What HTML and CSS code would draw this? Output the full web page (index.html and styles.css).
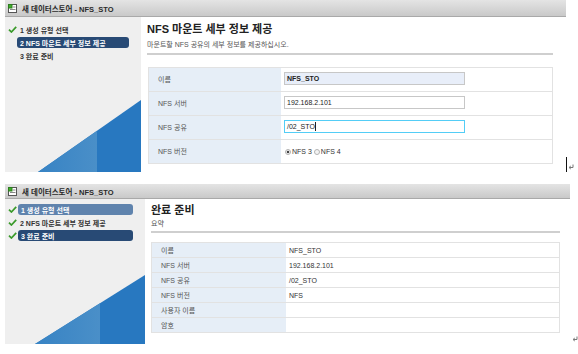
FILE: index.html
```html
<!doctype html>
<html lang="ko">
    <head>
        <meta charset="UTF-8" />
        <meta name="viewport" content="width=device-width, initial-scale=1" />
        <link rel="stylesheet" href="styles.css">
        <title>새 데이터스토어 - NFS_STO</title>
    </head>
    <body>
        <!-- Step 2: mount details -->
        <div class="row">
            <div class="dialog dialog-a">
                <div class="titlebar">
                    <svg class="app-icon" width="9" height="9" viewBox="0 0 9 9">
                        <rect x="0.5" y="0.5" width="8" height="8" fill="#fff" stroke="#555"/>
                        <rect x="0.5" y="0.5" width="3.5" height="3.5" fill="#3fae2a" stroke="#2e7d20"/>
                        <line x1="5" y1="3" x2="7.5" y2="3" stroke="#888"/>
                        <line x1="2" y1="5.5" x2="7.5" y2="5.5" stroke="#888"/>
                    </svg>
                    <span>새 데이터스토어 - NFS_STO</span>
                </div>
                <div class="dialog-body">
                    <aside class="steps">
                        <ul class="step-list">
                            <li class="step done"><span class="check"></span><span class="step-label">1 생성 유형 선택</span></li>
                            <li class="step"><span class="check"></span><span class="step-label current">2 NFS 마운트 세부 정보 제공</span></li>
                            <li class="step"><span class="check"></span><span class="step-label">3 완료 준비</span></li>
                        </ul>
                        <svg class="art" width="136" height="72" viewBox="0 0 136 72">
                            <defs>
                                <linearGradient id="lightA" x1="0" x2="1" y1="0" y2="0">
                                    <stop offset="0" stop-color="#3783c4"/>
                                    <stop offset="1" stop-color="#4a8fc8"/>
                                </linearGradient>
                            </defs>
                            <polygon points="33,72 136,0 136,72" fill="#2878c0"/>
                            <polygon points="33,72 92,30.8 92,72" fill="url(#lightA)"/>
                        </svg>
                    </aside>
                    <main class="pane">
                        <h1 class="pane-title">NFS 마운트 세부 정보 제공</h1>
                        <p class="pane-sub">마운트할 NFS 공유의 세부 정보를 제공하십시오.</p>
                        <div class="rule"></div>
                        <table class="form">
                            <tr>
                                <th>이름</th>
                                <td><div class="field filled">NFS_STO</div></td>
                            </tr>
                            <tr>
                                <th>NFS 서버</th>
                                <td><div class="field">192.168.2.101</div></td>
                            </tr>
                            <tr>
                                <th>NFS 공유</th>
                                <td><div class="field focus">/02_STO<span class="caret"></span></div></td>
                            </tr>
                            <tr>
                                <th>NFS 버전</th>
                                <td>
                                    <div class="radios">
                                        <span class="radio checked"></span><span>NFS 3</span>
                                        <span class="radio"></span><span>NFS 4</span>
                                    </div>
                                </td>
                            </tr>
                        </table>
                    </main>
                </div>
            </div>
            <div class="mark">
                <span class="cursor"></span>
                <svg class="para" width="6" height="6" viewBox="0 0 6 6">
                    <path d="M5 0.5 V3.5 H1.5 M2.8 2 L1 3.5 L2.8 5" fill="none" stroke="#777" stroke-width="1"/>
                </svg>
            </div>
        </div>

        <!-- Step 3: ready to complete -->
        <div class="row row-b">
            <div class="dialog dialog-b">
                <div class="titlebar">
                    <svg class="app-icon" width="9" height="9" viewBox="0 0 9 9">
                        <rect x="0.5" y="0.5" width="8" height="8" fill="#fff" stroke="#555"/>
                        <rect x="0.5" y="0.5" width="3.5" height="3.5" fill="#3fae2a" stroke="#2e7d20"/>
                        <line x1="5" y1="3" x2="7.5" y2="3" stroke="#888"/>
                        <line x1="2" y1="5.5" x2="7.5" y2="5.5" stroke="#888"/>
                    </svg>
                    <span>새 데이터스토어 - NFS_STO</span>
                </div>
                <div class="dialog-body">
                    <aside class="steps">
                        <ul class="step-list">
                            <li class="step done"><span class="check"></span><span class="step-label visited">1 생성 유형 선택</span></li>
                            <li class="step done"><span class="check"></span><span class="step-label">2 NFS 마운트 세부 정보 제공</span></li>
                            <li class="step done"><span class="check"></span><span class="step-label current">3 완료 준비</span></li>
                        </ul>
                        <svg class="art" width="140" height="69" viewBox="0 0 140 69">
                            <defs>
                                <linearGradient id="lightB" x1="0" x2="1" y1="0" y2="0">
                                    <stop offset="0" stop-color="#3783c4"/>
                                    <stop offset="1" stop-color="#4a8fc8"/>
                                </linearGradient>
                            </defs>
                            <polygon points="30,69 140,0 140,69" fill="#2878c0"/>
                            <polygon points="30,69 95,28.2 95,69" fill="url(#lightB)"/>
                        </svg>
                    </aside>
                    <main class="pane">
                        <h1 class="pane-title">완료 준비</h1>
                        <p class="pane-sub">요약</p>
                        <div class="rule"></div>
                        <table class="summary">
                            <tr><th>이름</th><td>NFS_STO</td></tr>
                            <tr><th>NFS 서버</th><td>192.168.2.101</td></tr>
                            <tr><th>NFS 공유</th><td>/02_STO</td></tr>
                            <tr><th>NFS 버전</th><td>NFS</td></tr>
                            <tr><th>사용자 이름</th><td></td></tr>
                            <tr><th>암호</th><td></td></tr>
                        </table>
                    </main>
                </div>
            </div>
            <div class="mark">
                <svg class="para" width="6" height="6" viewBox="0 0 6 6">
                    <path d="M5 0.5 V3.5 H1.5 M2.8 2 L1 3.5 L2.8 5" fill="none" stroke="#777" stroke-width="1"/>
                </svg>
            </div>
        </div>
    </body>
</html>
```

FILE: styles.css
```css
html,
body {
    margin: 0;
    padding: 0;
}
body {
    background: #fff;
    font-family: "Liberation Sans", "Noto Sans CJK KR", sans-serif;
    font-size: 7px;
    color: #333;
    overflow: hidden;
}

/* -- PAGE ROWS -- */

.row {
    display: flex;
    align-items: flex-end;
    padding-left: 5px;
}
.row-b {
    margin-top: 12px;
}
.mark {
    display: flex;
    align-items: flex-end;
    height: 16px;
}
.cursor {
    width: 1px;
    height: 15px;
    background: #111;
}
.para {
    margin-left: 1px;
    margin-bottom: 2px;
}
.row-b .mark {
    margin-left: 1px;
}

/* -- DIALOG -- */

.dialog {
    display: flex;
    flex-direction: column;
    overflow: hidden;
}
.dialog-a {
    width: 561px;
    height: 172px;
}
.dialog-b {
    width: 566px;
    height: 160px;
}
.titlebar {
    display: flex;
    align-items: center;
    gap: 5px;
    padding-left: 3px;
    background: linear-gradient(#e4e4e4, #c9c9c9);
    border-bottom: 1px solid #a9a9a9;
    font-weight: bold;
    font-size: 7.5px;
    color: #2a2a2a;
}
.dialog-a .titlebar {
    height: 16px;
}
.dialog-b .titlebar {
    height: 14px;
}
.dialog-body {
    flex: 1;
    display: flex;
    min-height: 0;
}

/* -- STEPS -- */

.steps {
    display: flex;
    flex-direction: column;
    justify-content: space-between;
    background: #efefef;
}
.dialog-a .steps {
    width: 136px;
}
.dialog-b .steps {
    width: 140px;
}
.step-list {
    list-style: none;
    margin: 0;
    padding: 7px 0 0 3px;
}
.dialog-b .step-list {
    padding-top: 5px;
}
.step {
    display: flex;
    align-items: center;
    height: 11px;
    margin-bottom: 2px;
    font-weight: bold;
    color: #333;
}
.check {
    width: 9px;
    height: 7px;
    flex: none;
}
.step.done .check {
    background: no-repeat center / 9px 7px
        url("data:image/svg+xml,%3Csvg xmlns='http://www.w3.org/2000/svg' viewBox='0 0 9 7'%3E%3Cpath d='M1 3.6 L3.4 6 L8.2 0.8' fill='none' stroke='%233a9a2a' stroke-width='1.7'/%3E%3C/svg%3E");
}
.step-label {
    display: flex;
    align-items: center;
    height: 11px;
    padding: 0 4px 0 3px;
    border-radius: 3px;
}
.step-label.current,
.step-label.visited {
    color: #fff;
    margin-left: 1px;
}
.step-label.current {
    background: #284a75;
}
.step-label.visited {
    background: #5f83ad;
}
.dialog-a .step-label.current {
    width: 105px;
    margin-left: 0;
}
.dialog-b .step-label.current,
.dialog-b .step-label.visited {
    width: 108px;
}
.art {
    display: block;
}

/* -- CONTENT PANE -- */

.pane {
    flex: 1;
    background: #fff;
    padding: 5px 13px 0 6px;
}
.dialog-b .pane {
    padding: 4px 10px 0 6px;
}
.pane-title {
    margin: 0;
    font-size: 11px;
    line-height: 14px;
    color: #222;
}
.pane-sub {
    margin: 4px 0 0;
    font-size: 7px;
    line-height: 9px;
    color: #555;
}
.dialog-b .pane-sub {
    margin-top: 2px;
}
.rule {
    height: 2px;
    margin-top: 4px;
    background: #cfcfcf;
}
.dialog-b .rule {
    margin-top: 3px;
}

/* -- FORM TABLE -- */

.form,
.summary {
    width: 100%;
    border-collapse: collapse;
    border: 1px solid #e2e2e2;
}
.form {
    margin: 12px 0 0 1px;
    width: 405px;
}
.form th,
.form td {
    border-bottom: 1px solid #e2e2e2;
    padding: 0;
    vertical-align: top;
}
.form th,
.summary th {
    text-align: left;
    font-weight: normal;
    color: #555;
    background: #e6eef7;
}
.form th {
    width: 123px;
    height: 17px;
    padding: 6px 0 0 9px;
}
.form td {
    height: 19px;
    padding: 4px 0 0 3px;
}
.field {
    display: flex;
    align-items: center;
    width: 175px;
    height: 11px;
    padding: 0 2px;
    border: 1px solid #c7c7c7;
    background: #fff;
    color: #222;
}
.field.filled {
    background: #e8eef9;
    font-weight: bold;
}
.field.focus {
    border-color: #53cdf6;
}
.caret {
    width: 1px;
    height: 9px;
    background: #222;
}
.radios {
    display: flex;
    align-items: center;
    gap: 1px;
    padding-top: 4px;
    color: #333;
}
.radio {
    width: 6px;
    height: 6px;
    border: 1px solid #b3b3b3;
    border-radius: 50%;
    background: #f4f4f4;
    box-sizing: border-box;
    margin-left: 1px;
}
.radio.checked {
    background: radial-gradient(circle, #444 1.4px, #f4f4f4 1.6px);
}

/* -- SUMMARY TABLE -- */

.summary {
    margin: 9px 0 0;
}
.summary th,
.summary td {
    height: 14px;
    padding: 0;
    border-bottom: 1px solid #e2e2e2;
}
.summary th {
    width: 125px;
    padding-left: 9px;
}
.summary td {
    padding-left: 3px;
    color: #333;
}
```
